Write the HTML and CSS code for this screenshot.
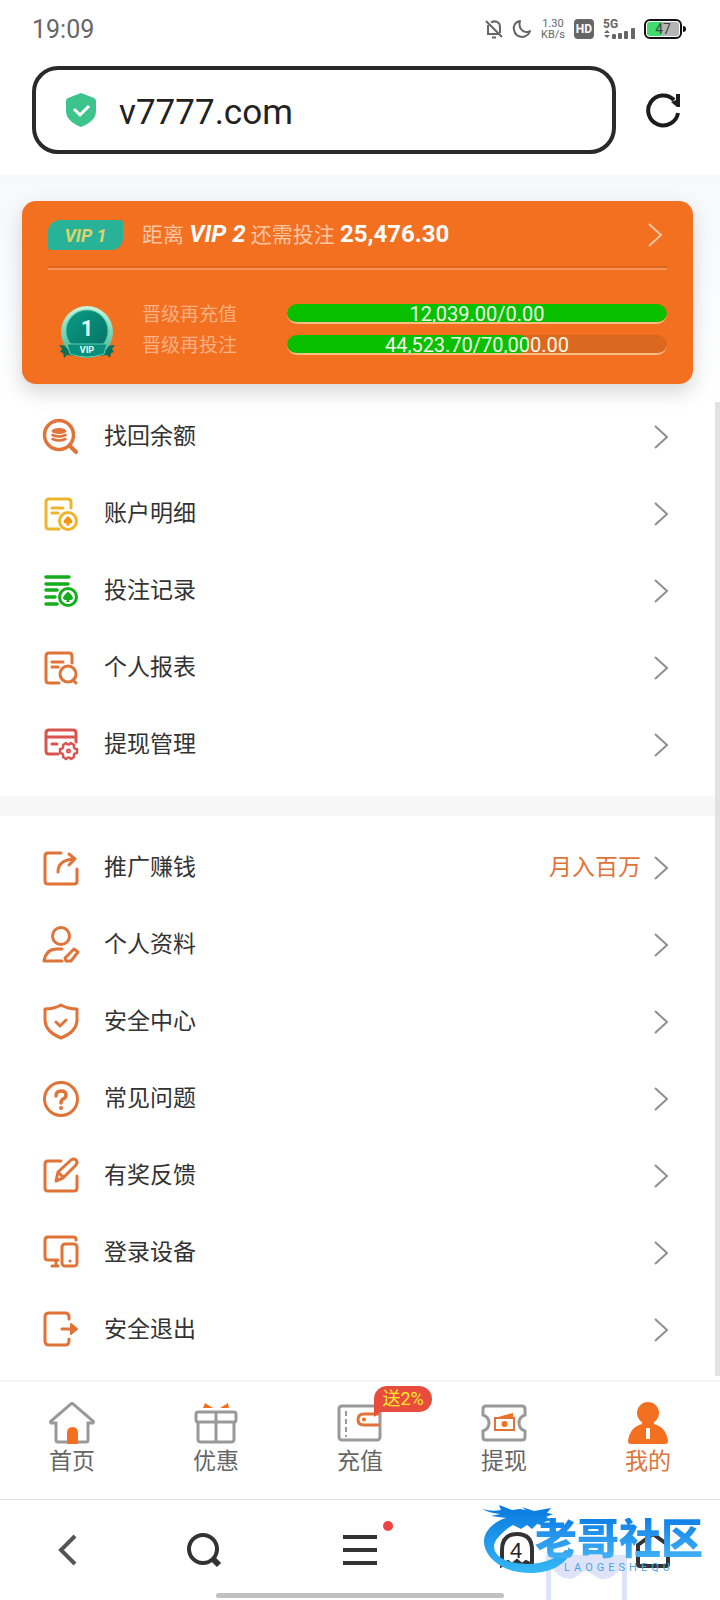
FILE: index.html
```html
<!DOCTYPE html>
<html lang="zh-CN">
<head>
    <meta charset="UTF-8">
    <meta name="viewport" content="width=device-width, initial-scale=1.0">
    <title>我的</title>
    <link rel="stylesheet" href="styles.css">
</head>
<body>
    <header class="phone-top">
        <div class="status-bar">
            <span class="time">19:09</span>
            <div class="status-icons">
                <svg width="18" height="20" viewBox="0 0 18 20" fill="none" stroke="#666" stroke-width="2">
                    <path d="M3 6v9h11M6 3.5C10 1 15 3 15 8v6M1 2l16 16"/>
                    <path d="M7 18.5h4"/>
                </svg>
                <svg width="20" height="20" viewBox="0 0 20 20" fill="none" stroke="#666" stroke-width="2" stroke-linejoin="round">
                    <path d="M8 2C3 3 1 7 2 11c1 5 5 7 9 7 4-1 6-3 7-6-3 2-7 1-9-2-2-3-2-5-1-8z"/>
                </svg>
                <span class="speed">1.30<br>KB/s</span>
                <span class="hd">HD</span>
                <div class="signal">
                    <span>5G</span>
                    <svg width="32" height="20" viewBox="0 0 32 20" fill="#666">
                        <path d="M1 14l3-3 3 3zM1 16l3 3 3-3z"/>
                        <rect x="9" y="15" width="4" height="5" rx="1"/>
                        <rect x="15" y="14" width="4" height="6" rx="1"/>
                        <rect x="21" y="12" width="4" height="8" rx="1"/>
                        <rect x="28" y="9" width="4" height="11" rx="1"/>
                    </svg>
                </div>
                <div class="battery"><span>47</span></div>
            </div>
        </div>
        <form class="address-row">
            <div class="address-box">
                <svg width="32" height="34" viewBox="0 0 32 34">
                    <path d="M16 0L29 5Q31 6 31 8V18Q31 28 16 34Q1 28 1 18V8Q1 6 3 5Z" fill="#3dc48d"/>
                    <path d="M9 16l6 6 9-9" fill="none" stroke="#fff" stroke-width="3"/>
                </svg>
                <input type="text" aria-label="网址" value="v7777.com">
            </div>
            <button type="button" class="reload" aria-label="刷新">
                <svg width="36" height="36" viewBox="0 0 36 36" fill="none" stroke="#1c1c1c" stroke-width="4">
                    <path d="M33 21A15 15 0 1 1 29 8"/>
                    <path d="M31 2h4v13h-3l-6-5 5-2z" fill="#1c1c1c" stroke="none"/>
                </svg>
            </button>
        </form>
    </header>

    <main class="page">
        <section class="vip-card">
            <a class="vip-head" href="#vip">
                <span class="vip-tag">VIP 1</span>
                <span class="vip-text">距离 <b><i>VIP 2</i></b> 还需投注 <b>25,476.30</b></span>
                <svg class="arrow" width="16" height="24" viewBox="0 0 16 24"><path d="M2 1l12 11L2 23"/></svg>
            </a>
            <div class="vip-body">
                <div class="medal">
                    <svg width="56" height="54" viewBox="0 0 56 54">
                        <defs>
                            <linearGradient id="ring" x1="0" y1="0" x2="0" y2="1">
                                <stop offset="0" stop-color="#c9f5dc"/>
                                <stop offset="1" stop-color="#33b795"/>
                            </linearGradient>
                            <linearGradient id="disc" x1="0" y1="0" x2="1" y2="1">
                                <stop offset="0" stop-color="#0b9c84"/>
                                <stop offset="1" stop-color="#067065"/>
                            </linearGradient>
                        </defs>
                        <path d="M0 40l10 1 6 10-8-1-3 3-1-5-3-1 2-3zM56 40l-10 1-6 10 8-1 3 3 1-5 3-1-2-3z" fill="#08705c"/>
                        <circle cx="28" cy="27" r="26" fill="url(#ring)"/>
                        <circle cx="28" cy="26" r="21" fill="url(#disc)" stroke="#4ec4a4"/>
                        <path d="M8 39h40l-3 10q-17 6-34 0z" fill="#0a8f7c" stroke="#5fd0b2"/>
                        <text x="28" y="31" class="medal-num">1</text>
                        <text x="28" y="48" class="medal-vip">VIP</text>
                    </svg>
                </div>
                <div class="progress-list">
                    <div class="progress-row">
                        <span class="label">晋级再充值</span>
                        <div class="bar"><div class="fill" style="width: 100%"></div><span>12,039.00/0.00</span></div>
                    </div>
                    <div class="progress-row">
                        <span class="label">晋级再投注</span>
                        <div class="bar"><div class="fill" style="width: 63.6%"></div><span>44,523.70/70,000.00</span></div>
                    </div>
                </div>
            </div>
        </section>

        <nav class="menu">
            <a href="#balance">
                <svg class="icon" viewBox="0 0 36 36">
                    <circle cx="16" cy="16" r="14.5" stroke-width="3.5"/><path d="M27 27l6 6" stroke-width="4"/>
                    <ellipse cx="16" cy="12" rx="7.5" ry="3" fill="currentColor" stroke="none"/>
                    <path d="M9.5 16q6.5 3 13 0M9.5 20q6.5 3 13 0" stroke-width="2.5"/>
                </svg>
                <span>找回余额</span>
                <svg class="arrow" width="16" height="24" viewBox="0 0 16 24"><path d="M2 1l12 11L2 23"/></svg>
            </a>
            <a href="#account">
                <svg class="icon yellow" viewBox="0 0 36 36">
                    <path d="M28 12V6q0-3-3-3H6Q3 3 3 6v24q0 3 3 3h10M9 12h11M9 17h6"/>
                    <circle cx="25" cy="25" r="8.5"/>
                    <path d="M25 20q-7 6-3 7.5h2l-1 2h4l-1-2h2q4-1.5-3-7.5z" fill="#f3960c" stroke="none"/>
                </svg>
                <span>账户明细</span>
                <svg class="arrow" width="16" height="24" viewBox="0 0 16 24"><path d="M2 1l12 11L2 23"/></svg>
            </a>
            <a href="#bets">
                <svg class="icon green" viewBox="0 0 36 36">
                    <path d="M3 4h23M3 11h22M3 17h11M3 24h9M3 31h11" stroke-width="3.5"/>
                    <circle cx="25" cy="24" r="8.5"/>
                    <path d="M25 18.5q-8 7-3 8.5h2l-1 2h4l-1-2h2q5-1.5-3-8.5z" fill="currentColor" stroke="none"/>
                </svg>
                <span>投注记录</span>
                <svg class="arrow" width="16" height="24" viewBox="0 0 16 24"><path d="M2 1l12 11L2 23"/></svg>
            </a>
            <a href="#report">
                <svg class="icon" viewBox="0 0 36 36">
                    <path d="M29 13V6q0-3-3-3H6Q3 3 3 6v24q0 3 3 3h10M9 12h11M9 17h6"/>
                    <circle cx="25" cy="24" r="8"/><path d="M30 30l3 3"/>
                </svg>
                <span>个人报表</span>
                <svg class="arrow" width="16" height="24" viewBox="0 0 16 24"><path d="M2 1l12 11L2 23"/></svg>
            </a>
            <a href="#withdraw-manage">
                <svg class="icon red" viewBox="0 0 36 36">
                    <path d="M33 15V6q0-3-3-3H6Q3 3 3 6v18q0 3 3 3h9M3 10h30M9 17h5"/>
                    <path d="M23 16q2 3 5 0l3 2q-1 4 3 4v4q-4 0-3 4l-3 2q-2-3-5 0l-3-2q1-4-3-4v-4q4 0 3-4z" stroke-width="2.5"/>
                    <circle cx="25.5" cy="24" r="1.5" stroke-width="2"/>
                </svg>
                <span>提现管理</span>
                <svg class="arrow" width="16" height="24" viewBox="0 0 16 24"><path d="M2 1l12 11L2 23"/></svg>
            </a>
        </nav>

        <nav class="menu">
            <a href="#promote">
                <svg class="icon" viewBox="0 0 36 36">
                    <path d="M18 3H5Q2 3 2 6v25q0 3 3 3h26q3 0 3-3V19M15 22Q15 10 31 9M26 4l6 5-6 6"/>
                </svg>
                <span>推广赚钱</span>
                <em>月入百万</em>
                <svg class="arrow" width="16" height="24" viewBox="0 0 16 24"><path d="M2 1l12 11L2 23"/></svg>
            </a>
            <a href="#profile">
                <svg class="icon" viewBox="0 0 36 36">
                    <circle cx="18" cy="9" r="8.5"/>
                    <path d="M19 22H14Q3 22 1 34H19M31 22l4 3-7 9h-5l-1-3z"/>
                </svg>
                <span>个人资料</span>
                <svg class="arrow" width="16" height="24" viewBox="0 0 16 24"><path d="M2 1l12 11L2 23"/></svg>
            </a>
            <a href="#security">
                <svg class="icon" viewBox="0 0 36 36">
                    <path d="M18 1q7 4 16 4v12q-1 11-16 17Q3 28 2 17V5q9 0 16-4zM13 18l4 4 6-6"/>
                </svg>
                <span>安全中心</span>
                <svg class="arrow" width="16" height="24" viewBox="0 0 16 24"><path d="M2 1l12 11L2 23"/></svg>
            </a>
            <a href="#faq">
                <svg class="icon" viewBox="0 0 36 36">
                    <circle cx="18" cy="18" r="16.5"/>
                    <path d="M13 15q0-5 5-5t5 4q0 3-3 4-2 1-2 4" stroke-width="3.5"/>
                    <circle cx="18" cy="27" r="2" fill="currentColor" stroke="none"/>
                </svg>
                <span>常见问题</span>
                <svg class="arrow" width="16" height="24" viewBox="0 0 16 24"><path d="M2 1l12 11L2 23"/></svg>
            </a>
            <a href="#feedback">
                <svg class="icon" viewBox="0 0 36 36">
                    <path d="M18 3H5Q2 3 2 6v24q0 3 3 3h26q3 0 3-3V18M13 23l2-9L28 2q3-2 5 0 2 2 0 5L20 20zM16 15l4 4"/>
                </svg>
                <span>有奖反馈</span>
                <svg class="arrow" width="16" height="24" viewBox="0 0 16 24"><path d="M2 1l12 11L2 23"/></svg>
            </a>
            <a href="#devices">
                <svg class="icon" viewBox="0 0 36 36">
                    <path d="M33 5V4q0-2-3-2H5Q2 2 2 5v17q0 3 3 3h10M13 25v6M9 31h6"/>
                    <rect x="19" y="9" width="15" height="22" rx="3"/>
                    <circle cx="27" cy="26" r="1.5" fill="currentColor" stroke="none"/>
                </svg>
                <span>登录设备</span>
                <svg class="arrow" width="16" height="24" viewBox="0 0 16 24"><path d="M2 1l12 11L2 23"/></svg>
            </a>
            <a href="#logout">
                <svg class="icon" viewBox="0 0 36 36">
                    <path d="M26 7V5q0-4-4-4H6Q2 1 2 5v24q0 4 4 4h16q4 0 4-4v-2M19 17h13"/>
                    <path d="M28 12l6 5-6 5z" fill="currentColor" stroke-width="2"/>
                </svg>
                <span>安全退出</span>
                <svg class="arrow" width="16" height="24" viewBox="0 0 16 24"><path d="M2 1l12 11L2 23"/></svg>
            </a>
        </nav>
        <div class="scroll-thumb"></div>
    </main>

    <nav class="tab-bar">
        <a href="#home">
            <svg viewBox="0 0 46 42">
                <path d="M7 21H2q-1-1 0-2L22 2q1-1 2 0l20 17q1 1 0 2h-5v17q0 2-2 2H9q-2 0-2-2z"/>
                <path d="M18 42V31q0-6 5.5-6t5.5 6v11z" class="solid"/>
            </svg>
            <span>首页</span>
        </a>
        <a href="#offers">
            <svg viewBox="0 0 46 42">
                <rect x="3" y="10" width="40" height="10" rx="2"/>
                <path d="M5 20v17q0 3 3 3h30q3 0 3-3V20M23 10v30"/>
                <path d="M10 6l2-5 8 5zM36 6l-1-5-8 5z" class="solid"/>
            </svg>
            <span>优惠</span>
        </a>
        <a href="#deposit">
            <svg viewBox="0 0 46 42">
                <rect x="2" y="4" width="41" height="34" rx="3"/>
                <path d="M9 9v26" stroke-width="2" stroke-dasharray="5 3"/>
                <path d="M42 12H27q-6 0-6 5.5t6 5.5h15" class="accent"/>
                <circle cx="27" cy="17.5" r="2" class="solid"/>
            </svg>
            <span>充值</span>
            <b class="bubble">送2%</b>
        </a>
        <a href="#withdraw">
            <svg viewBox="0 0 46 42">
                <path d="M5 4h36q3 0 3 3v6q-6 2-6 8t6 8v6q0 3-3 3H5q-3 0-3-3v-6q6-2 6-8t-6-8V7q0-3 3-3z"/>
                <rect x="14" y="16" width="19" height="12" class="accent thin"/>
                <path d="M17 15l15-4v4z" class="solid"/>
                <circle cx="23.5" cy="22" r="3" class="solid"/>
            </svg>
            <span>提现</span>
        </a>
        <a href="#mine" class="active">
            <svg viewBox="0 0 46 42">
                <circle cx="23" cy="11" r="11" class="solid"/>
                <path d="M17 19h12v3q12 3 14 17 0 3-3 3H6q-3 0-3-3Q5 25 17 22z" class="solid"/>
                <path d="M23 26v11" class="tie"/>
            </svg>
            <span>我的</span>
        </a>
    </nav>

    <footer class="browser-bar">
        <button type="button" aria-label="后退">
            <svg width="36" height="36" viewBox="0 0 36 36"><path d="M25 4L11 18l14 14" class="back"/></svg>
        </button>
        <button type="button" aria-label="搜索">
            <svg width="36" height="36" viewBox="0 0 36 36"><circle cx="17" cy="17" r="14"/><path d="M26 26l7 7" stroke-width="6"/></svg>
        </button>
        <button type="button" aria-label="菜单">
            <svg width="36" height="36" viewBox="0 0 36 36"><path d="M1 5h34M1 18h34M1 31h34"/></svg>
            <i class="dot"></i>
        </button>
        <button type="button" aria-label="标签页">
            <svg width="36" height="36" viewBox="0 0 36 36">
                <path d="M3 33V18Q3 2 18 2t15 16v15l-6-3-4 3-5-4-5 4-4-3z"/>
                <text x="17" y="26" class="count">4</text>
            </svg>
        </button>
        <button type="button" aria-label="主页">
            <svg width="36" height="36" viewBox="0 0 36 36"><path d="M3 13L18 2l15 11v19q0 2-2 2H5q-2 0-2-2z"/></svg>
        </button>

        <div class="watermark">
            <svg width="240" height="95" viewBox="0 0 240 95">
                <defs>
                    <linearGradient id="dragon" x1="0" y1="0" x2="0" y2="1">
                        <stop offset="0" stop-color="#0878df"/>
                        <stop offset="1" stop-color="#35b8f6"/>
                    </linearGradient>
                </defs>
                <path d="M66 50h81v45h-5V62q-12 16-24 11l-12-8-12 8q-12 4-23-11v33h-5z" fill="#dfe3fa"/>
                <path d="M2 4q10 3 19 1l-2-5 13 5 8-1 6 1-4-3 12 4 17-3-4 5 6 1-7 3 6 3-8 2 2 4-9-2-5 5-5-4-6 4-8-4Q25 24 16 35 9 48 27 56q24 7 45-2 10-4 13-9l7 1Q82 66 54 68 25 69 10 52-1 37 8 25 15 16 26 13L11 11l9-2Q9 8 2 4z" fill="url(#dragon)"/>
            </svg>
            <div class="watermark-text">
                <strong>老哥社区</strong>
                <small>LAOGESHEQU</small>
            </div>
        </div>
        <div class="home-indicator"></div>
    </footer>
</body>
</html>
```
FILE: styles.css
```css
:root {
    --orange: #f37021;
    --icon: #e07337;
    --text: #333;
    --grey: #999;
}

* {
    margin: 0;
    padding: 0;
    box-sizing: border-box;
}

body {
    min-height: 100vh;
    display: flex;
    flex-direction: column;
    background: #fff;
    color: var(--text);
    font-family: Roboto, "Noto Sans CJK SC", sans-serif;
}

a {
    color: inherit;
    text-decoration: none;
}

button {
    border: none;
    background: none;
}

/* phone status and address bar */
.phone-top {
    padding: 0 32px 21px;
}

.status-bar {
    height: 58px;
    display: flex;
    align-items: center;
    justify-content: space-between;
    margin-bottom: 8px;
}

.time {
    font-size: 25px;
    color: #666;
}

.status-icons {
    display: flex;
    align-items: center;
    gap: 9px;
    color: #666;
}

.speed {
    font-size: 11px;
    line-height: 11px;
    text-align: center;
}

.hd {
    width: 20px;
    height: 20px;
    border-radius: 4px;
    background: #666;
    color: #fff;
    font-size: 12px;
    font-weight: 700;
    line-height: 20px;
    text-align: center;
}

.signal {
    position: relative;
    height: 20px;
}

.signal span {
    position: absolute;
    top: 0;
    left: 0;
    font-size: 12px;
    line-height: 10px;
    font-weight: 700;
}

.battery {
    position: relative;
    width: 38px;
    height: 20px;
    margin-right: 6px;
    padding: 1px;
    border: 2px solid #111;
    border-radius: 6px;
}

.battery::after {
    content: '';
    position: absolute;
    top: 5px;
    right: -6px;
    width: 3px;
    height: 6px;
    border-radius: 0 3px 3px 0;
    background: #111;
}

.battery span {
    display: block;
    height: 14px;
    border-radius: 3px;
    background: linear-gradient(90deg, #3ddc6c 45%, #b5b5b5 45%);
    color: #444;
    font-size: 14px;
    line-height: 14px;
    text-align: center;
}

.address-row {
    display: flex;
    align-items: center;
    gap: 29px;
}

.address-box {
    flex: 1;
    height: 88px;
    display: flex;
    align-items: center;
    gap: 22px;
    padding: 0 29px;
    border: 4px solid #2a2a2a;
    border-radius: 26px;
}

.address-box input {
    flex: 1;
    min-width: 0;
    padding-top: 4px;
    border: none;
    outline: none;
    background: none;
    color: #222;
    font-family: inherit;
    font-size: 35px;
}

.reload {
    width: 43px;
    height: 36px;
    text-align: left;
}

/* account page */
.page {
    position: relative;
    flex: 1;
    background: linear-gradient(#f7f8fb, #fff 240px);
}

.vip-card {
    margin: 26px 27px 0 22px;
    padding: 0 26px 24px;
    border-radius: 14px;
    background: var(--orange);
    box-shadow: 0 8px 20px rgba(0, 0, 0, 0.16);
    color: #fcc6a3;
}

.vip-head {
    height: 69px;
    display: flex;
    align-items: center;
    border-bottom: 2px solid #f8935a;
    box-shadow: inset 0 -2px 0 #dc651d;
}

.vip-tag {
    width: 75px;
    height: 30px;
    margin-right: 19px;
    border-radius: 12px 3px 12px 3px;
    background: #28b399;
    color: #dcd36c;
    font-size: 18px;
    font-weight: 700;
    font-style: italic;
    line-height: 32px;
    text-align: center;
}

.vip-text {
    flex: 1;
    font-size: 21px;
    line-height: 30px;
}

.vip-text b {
    color: #fff;
    font-size: 24px;
}

.arrow {
    fill: none;
    stroke: #8e8e93;
    stroke-width: 2;
}

.vip-head .arrow {
    margin-right: 4px;
    stroke: #fcc6a3;
}

.vip-body {
    display: flex;
    padding-top: 28px;
}

.medal {
    width: 78px;
    margin-right: 16px;
    padding-top: 7px;
}

.medal svg {
    display: block;
    margin: 0 auto;
}

.medal-num,
.medal-vip {
    fill: #e6fff6;
    font-size: 22px;
    font-weight: 700;
    text-anchor: middle;
}

.medal-vip {
    font-size: 9px;
}

.progress-list {
    flex: 1;
}

.progress-row {
    height: 31px;
    display: flex;
    align-items: center;
}

.label {
    width: 145px;
    padding-bottom: 2px;
    font-size: 19px;
    color: #fbb083;
}

.bar {
    position: relative;
    flex: 1;
    height: 20px;
    overflow: hidden;
    border-bottom: 2px solid #f9bd85;
    border-radius: 10px;
    background: #dc6820;
}

.fill {
    height: 100%;
    border-radius: 10px;
    background: #08bf00;
}

.bar span {
    position: absolute;
    top: 0;
    left: 0;
    width: 100%;
    color: #f4fbe8;
    font-size: 20px;
    line-height: 20px;
    text-align: center;
}

.menu {
    padding: 14px 51px 13px 43px;
}

.menu + .menu {
    padding: 13px 51px 12px 43px;
    border-top: 20px solid #f7f7f7;
}

.menu a {
    height: 77px;
    display: flex;
    align-items: center;
    font-size: 23px;
    line-height: 30px;
}

.menu span {
    flex: 1;
    margin-left: 25px;
}

.menu em {
    margin-right: 12px;
    font-style: normal;
    color: var(--icon);
}

.icon {
    width: 36px;
    height: 36px;
    overflow: visible;
    color: var(--icon);
    fill: none;
    stroke: currentColor;
    stroke-width: 3;
    stroke-linecap: round;
    stroke-linejoin: round;
}

.yellow {
    color: #eeb52c;
}

.green {
    color: #16ad1c;
}

.red {
    color: #d9534f;
}

.scroll-thumb {
    position: absolute;
    top: 227px;
    right: 0;
    bottom: 4px;
    width: 5px;
    background: #e2e2e2;
}

/* site tabs */
.tab-bar {
    height: 120px;
    display: grid;
    grid-template-columns: repeat(5, 1fr);
    border-top: 2px solid #f4f4f4;
    border-bottom: 1px solid #ddd;
}

.tab-bar a {
    position: relative;
    display: flex;
    flex-direction: column;
    align-items: center;
    padding-top: 20px;
    color: #666;
    font-size: 23px;
    line-height: 36px;
}

.tab-bar svg {
    width: 46px;
    height: 42px;
    fill: none;
    stroke: var(--grey);
    stroke-width: 3;
}

.tab-bar .solid {
    fill: var(--orange);
    stroke: none;
}

.tab-bar .accent {
    stroke: var(--icon);
}

.tab-bar .thin {
    stroke-width: 2;
}

.tab-bar .tie {
    stroke: #fff;
    stroke-width: 4;
}

.tab-bar .active {
    color: var(--icon);
}

.bubble {
    position: absolute;
    top: 4px;
    left: 60%;
    height: 26px;
    padding: 0 8px;
    border-radius: 13px 13px 13px 0;
    background: #e84c3d;
    color: #ffe92e;
    font-size: 18px;
    font-weight: 400;
    line-height: 26px;
}

.bubble::after {
    content: '';
    position: absolute;
    left: 0;
    top: 25px;
    border-top: 6px solid #e84c3d;
    border-right: 7px solid transparent;
}

/* browser toolbar */
.browser-bar {
    position: relative;
    height: 100px;
    display: grid;
    grid-template-columns: 135fr 137fr 176fr 137fr 135fr;
}

.browser-bar button {
    position: relative;
    height: 100px;
}

.browser-bar button svg {
    display: block;
    margin: 0 auto;
    fill: none;
    stroke: #333;
    stroke-width: 4;
}

.browser-bar .back {
    stroke: #555;
}

.browser-bar .count {
    fill: #222;
    stroke: none;
    font-size: 22px;
    text-anchor: middle;
}

.dot {
    position: absolute;
    top: 21px;
    left: 63%;
    width: 10px;
    height: 10px;
    border-radius: 50%;
    background: #ee4444;
}

.watermark {
    position: absolute;
    top: 5px;
    right: 0;
    width: 240px;
    height: 95px;
    pointer-events: none;
}

.watermark-text {
    position: absolute;
    top: 13px;
    right: 17px;
    display: flex;
    flex-direction: column;
    align-items: center;
}

.watermark strong {
    font-size: 42px;
    font-weight: 900;
    line-height: 44px;
    white-space: nowrap;
    color: transparent;
    background: linear-gradient(#0e80e8, #46b5f6);
    background-clip: text;
    -webkit-background-clip: text;
}

.watermark small {
    color: #4aa5e6;
    font-size: 11px;
    letter-spacing: 4px;
    line-height: 11px;
}

.home-indicator {
    position: absolute;
    bottom: 2px;
    left: 30%;
    right: 30%;
    height: 5px;
    border-radius: 3px;
    background: #c0c0c0;
}
```
